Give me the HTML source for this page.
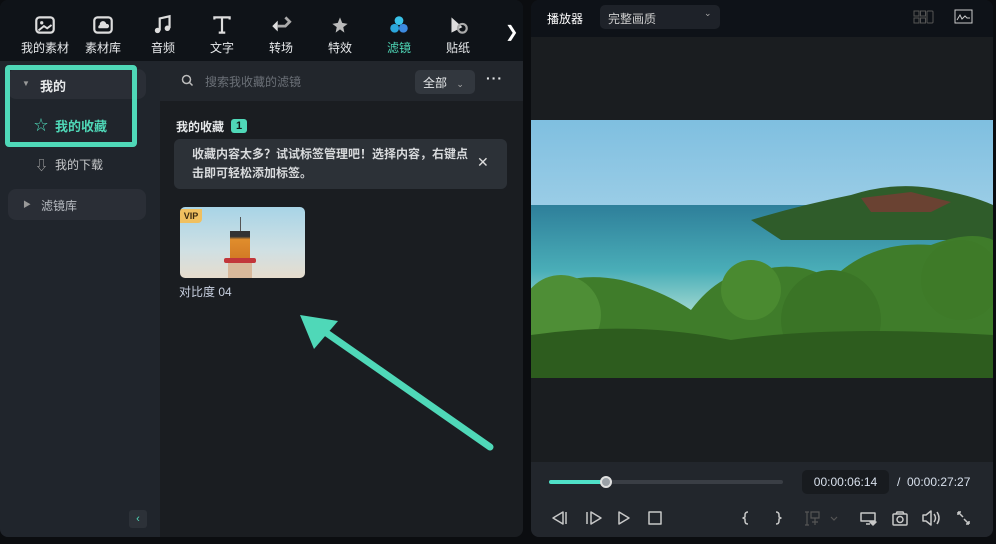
<!DOCTYPE html>
<html><head><meta charset="utf-8"><style>
*{margin:0;padding:0;box-sizing:border-box}
body{width:996px;height:544px;background:#0b0d10;font-family:"Liberation Sans","Noto Sans CJK SC",sans-serif;position:relative;overflow:hidden;color:#e6e8ea}
.abs{position:absolute}
#left{left:0;top:0;width:523px;height:537px;border-radius:8px;overflow:hidden;background:#1a1d21}
#top{left:0;top:0;width:523px;height:61px;background:#0f1318}
.tab{position:absolute;top:14px;width:56px;text-align:center;font-size:12px;color:#e8eaec}
.tab svg{display:block;margin:0 auto 3px;width:24px;height:22px}
#side{left:0;top:61px;width:160px;height:476px;background:#20252c}
.btn{background:#2a2e36;border-radius:8px}
</style></head><body>
<div id="left" class="abs">
 <div id="top" class="abs">
  <div class="tab" style="left:17px"><svg viewBox="0 0 22 20"><rect x="3" y="3" width="16" height="14" rx="3" fill="none" stroke="#ddd" stroke-width="2"/><circle cx="8" cy="8" r="1.5" fill="#ddd"/><path d="M5 15l5-4 3 2 4-3" stroke="#ddd" stroke-width="1.8" fill="none"/></svg>我的素材</div>
  <div class="tab" style="left:75px"><svg viewBox="0 0 22 20"><rect x="3" y="3" width="16" height="14" rx="3" fill="none" stroke="#ddd" stroke-width="2"/><path d="M7 13h8a2 2 0 0 0-1-4 3 3 0 0 0-6 1 2 2 0 0 0-1 3z" fill="#ddd"/></svg>素材库</div>
  <div class="tab" style="left:135px"><svg viewBox="0 0 22 20"><path d="M8 15V4l9-2v11" stroke="#ddd" stroke-width="2" fill="none"/><circle cx="6" cy="15" r="2.5" fill="#ddd"/><circle cx="15" cy="13" r="2.5" fill="#ddd"/></svg>音频</div>
  <div class="tab" style="left:194px"><svg viewBox="0 0 22 20"><path d="M4 5V3h14v2M11 3v14M8 17h6" stroke="#ddd" stroke-width="2" fill="none"/></svg>文字</div>
  <div class="tab" style="left:253px"><svg viewBox="0 0 22 20"><path d="M3 11l5-5v10z" fill="#ddd"/><path d="M8 11h7l4-4-4-4" stroke="#aaa" stroke-width="2.5" fill="none"/></svg>转场</div>
  <div class="tab" style="left:312px"><svg viewBox="0 0 22 20"><path d="M11 3l2 5 5 1-4 3 1 5-4-3-4 3 1-5-4-3 5-1z" fill="#bbb"/></svg>特效</div>
  <div class="tab" style="left:371px;color:#4fd8b8"><svg viewBox="0 0 22 20"><circle cx="11" cy="6" r="4" fill="#39c2e8"/><circle cx="7" cy="13" r="4" fill="#2ba6db"/><circle cx="15" cy="13" r="4" fill="#3d8ae0"/></svg>滤镜</div>
  <div class="tab" style="left:430px"><svg viewBox="0 0 22 20"><path d="M5 17V3l10 9z" fill="#ddd"/><circle cx="15" cy="13" r="4" fill="none" stroke="#aaa" stroke-width="2"/></svg>贴纸</div>
  <div class="abs" style="left:505px;top:22px;font-size:16px;color:#fff">❯</div>
 </div>
 <div id="side" class="abs">
  <div class="abs btn" style="left:8px;top:8px;width:138px;height:30px"></div>
  <div class="abs" style="left:5px;top:4px;width:132px;height:82px;border:5px solid #4fd8b8;border-radius:4px"></div>
  <div class="abs" style="left:22px;top:18px;font-size:8px;color:#999">▼</div>
  <div class="abs" style="left:40px;top:15px;font-size:13px;font-weight:bold">我的</div>
  <div class="abs" style="left:34px;top:54px;font-size:14px;color:#4fd8b8">☆</div>
  <div class="abs" style="left:55px;top:55px;font-size:13px;font-weight:bold;color:#4fd8b8">我的收藏</div>
  <div class="abs" style="left:35px;top:94px;font-size:13px;color:#aaa">⇩</div>
  <div class="abs" style="left:55px;top:95px;font-size:12px;color:#c8cacc">我的下载</div>
  <div class="abs btn" style="left:8px;top:128px;width:138px;height:31px"></div>
  <div class="abs" style="left:23px;top:138px;font-size:8px;color:#999">▶</div>
  <div class="abs" style="left:41px;top:136px;font-size:12px;color:#b8bcc2">滤镜库</div>
  <div class="abs" style="left:129px;top:449px;width:18px;height:18px;background:#2c3138;border-radius:3px;color:#4fd8b8;font-size:11px;text-align:center;line-height:18px">‹</div>
 </div>
 <div class="abs" style="left:160px;top:61px;width:363px;height:40px;background:#22262c"></div>
 <svg class="abs" style="left:181px;top:74px" width="13" height="13"><circle cx="5.5" cy="5.5" r="4" fill="none" stroke="#bbb" stroke-width="1.5"/><path d="M8.5 8.5l3 3" stroke="#bbb" stroke-width="1.5"/></svg>
 <div class="abs" style="left:205px;top:73px;font-size:12px;color:#6b7077">搜索我收藏的滤镜</div>
 <div class="abs" style="left:415px;top:70px;width:60px;height:24px;background:#32373e;border-radius:5px;font-size:12px;padding:4px 0 0 8px">全部 <span style="font-size:9px;color:#aaa;margin-left:6px">⌄</span></div>
 <div class="abs" style="left:486px;top:70px;font-size:14px;font-weight:bold;letter-spacing:1px">···</div>
 <div class="abs" style="left:176px;top:118px;font-size:12px;font-weight:bold">我的收藏</div>
 <div class="abs" style="left:231px;top:119px;width:16px;height:14px;background:#4fd8b8;border-radius:3px;color:#0f1a16;font-size:11px;font-weight:bold;text-align:center;line-height:14px">1</div>
 <div class="abs" style="left:174px;top:139px;width:333px;height:50px;background:#2c3137;border-radius:6px;font-size:12px;font-weight:bold;color:#d8dadc;line-height:19px;padding:6px 0 0 18px">收藏内容太多？试试标签管理吧！选择内容，右键点<br>击即可轻松添加标签。</div>
 <div class="abs" style="left:477px;top:154px;font-size:14px;color:#ddd">✕</div>
 <div class="abs" style="left:180px;top:207px;width:125px;height:71px;border-radius:5px;overflow:hidden;background:linear-gradient(#a8d4e6,#cfe0e4 60%,#e6dccd)">
  <div class="abs" style="left:60px;top:10px;width:1px;height:16px;background:#555"></div>
  <div class="abs" style="left:50px;top:24px;width:20px;height:28px;background:linear-gradient(#333 20%,#e08d2c 30%,#d27a25)"></div>
  <div class="abs" style="left:44px;top:51px;width:32px;height:5px;background:#c2363a;border-radius:2px"></div>
  <div class="abs" style="left:48px;top:56px;width:24px;height:15px;background:#d8b89a"></div>
  <div class="abs" style="left:0;top:2px;width:22px;height:14px;background:#f0c060;border-radius:0 0 4px 0;font-size:9px;font-weight:bold;color:#3b2a10;text-align:center;line-height:14px">VIP</div>
 </div>
 <div class="abs" style="left:179px;top:283px;font-size:12px;color:#c8d0e0">对比度 04</div>
 <svg class="abs" style="left:290px;top:305px" width="220" height="160"><line x1="200" y1="142" x2="28" y2="22" stroke="#4fd8b8" stroke-width="7" stroke-linecap="round"/><path d="M10 10 L48 16 L24 44 Z" fill="#4fd8b8"/></svg>
</div>
<div class="abs" style="left:531px;top:0;width:462px;height:537px;border-radius:8px;overflow:hidden;background:#1a1d20">
 <div class="abs" style="left:0;top:0;width:462px;height:37px;background:#0e1218"></div>
 <div class="abs" style="left:16px;top:10px;font-size:12px;color:#fff">播放器</div>
 <div class="abs" style="left:69px;top:5px;width:120px;height:24px;background:#1e2229;border-radius:5px;font-size:12px;color:#ccc;padding:5px 0 0 8px">完整画质<span class="abs" style="left:104px;top:3px;font-size:9px;color:#aaa">⌄</span></div>
 <svg class="abs" style="left:382px;top:10px" width="22" height="15"><g fill="none" stroke="#555"><rect x="1" y="1" width="5" height="5"/><rect x="7.5" y="1" width="5" height="5"/><rect x="1" y="8" width="5" height="5"/><rect x="7.5" y="8" width="5" height="5"/><rect x="14" y="1" width="6" height="12" rx="1"/></g></svg>
 <svg class="abs" style="left:423px;top:9px" width="19" height="16"><rect x="1" y="1" width="17" height="13" fill="none" stroke="#ccc"/><path d="M3 11l3-5 2 4 3-3 2 2h3" fill="none" stroke="#ccc"/></svg>
 <svg class="abs" style="left:0;top:120px" width="462" height="258" viewBox="0 0 462 258">
  <defs><linearGradient id="sk" x1="0" y1="0" x2="0" y2="1"><stop offset="0" stop-color="#7fbfe0"/><stop offset="1" stop-color="#d0e8f2"/></linearGradient>
  <linearGradient id="se" x1="0" y1="0" x2="0" y2="1"><stop offset="0" stop-color="#2e7f9a"/><stop offset="0.6" stop-color="#4aaeb8"/><stop offset="1" stop-color="#a6dbd2"/></linearGradient></defs>
  <rect width="462" height="258" fill="url(#sk)"/>
  <rect y="85" width="462" height="110" fill="url(#se)"/>
  <path d="M220 100 Q270 85 320 75 Q360 62 400 68 Q440 75 462 85 V120 H250 Z" fill="#2f5c2a"/>
  <path d="M330 78 L380 72 L420 82 L400 92 L340 92 Z" fill="#6a4232"/>
  <path d="M0 175 Q40 150 90 160 Q130 170 160 190 Q190 150 230 150 Q270 140 300 160 Q340 120 400 125 Q440 110 462 120 V258 H0 Z" fill="#3f7c2a"/>
  <circle cx="30" cy="195" r="40" fill="#4e8e36"/><circle cx="220" cy="170" r="30" fill="#4a8a30"/>
  <circle cx="300" cy="200" r="50" fill="#3a7426"/><circle cx="430" cy="160" r="40" fill="#3e7a28"/>
  <path d="M0 215 Q100 200 200 220 Q300 205 462 215 V258 H0 Z" fill="#2d5c1e"/>
 </svg>
 <div class="abs" style="left:0;top:462px;width:462px;height:75px;background:#22262c"></div>
 <div class="abs" style="left:18px;top:480px;width:234px;height:4px;background:#3a3e45;border-radius:2px"></div>
 <div class="abs" style="left:18px;top:480px;width:57px;height:4px;background:#4fe0c8;border-radius:2px"></div>
 <div class="abs" style="left:69px;top:476px;width:12px;height:12px;background:#9aa0a6;border:2px solid #e0e0e0;border-radius:50%"></div>
 <div class="abs" style="left:271px;top:470px;width:87px;height:24px;background:#181b1f;border-radius:5px;font-size:12px;color:#d8e0ec;text-align:center;line-height:24px">00:00:06:14</div>
 <div class="abs" style="left:366px;top:475px;font-size:12px;color:#d8e0ec">/&nbsp;&nbsp;00:00:27:27</div>
 <svg class="abs" style="left:0;top:505px" width="462" height="28"><g fill="none" stroke="#c8c8c8" stroke-width="1.5" stroke-linejoin="round">
  <path d="M32 7 L22 13 L32 19 Z M35 7 V19"/>
  <path d="M56 7 V19 M60 7 L70 13 L60 19 Z"/>
  <path d="M88 7 L98 13 L88 19 Z"/>
  <rect x="118" y="7" width="12" height="12"/>
  <path d="M217 7 Q214 7 214 10 V12 L212 13 L214 14 V16 Q214 19 217 19"/>
  <path d="M245 7 Q248 7 248 10 V12 L250 13 L248 14 V16 Q248 19 245 19"/>
  <path d="M330 8 H344 V16 H330 Z M335 19 H339"/><path d="M339 17 L345 17 L342 20 Z" fill="#c8c8c8"/>
  <rect x="362" y="9" width="14" height="11" rx="1"/><circle cx="369" cy="14.5" r="3"/><path d="M365 9 L366 7 H372 L373 9"/>
  <path d="M392 10 H395 L400 6 V20 L395 16 H392 Z M403 9 Q406 13 403 17 M406 7 Q410 13 406 19"/>
  <path d="M427 7 L432 12 M427 7 H430 M427 7 V10 M438 19 L433 14 M438 19 H435 M438 19 V16"/>
 </g><g fill="none" stroke="#555" stroke-width="1.2"><path d="M276 7 V20 M274 7 H278 M274 20 H278 M280 7 H288 V13 H280 Z M284 13 V20 M281 17 H287"/><path d="M300 12 L303 15 L306 12"/></g></svg>
</div>
</body></html>
